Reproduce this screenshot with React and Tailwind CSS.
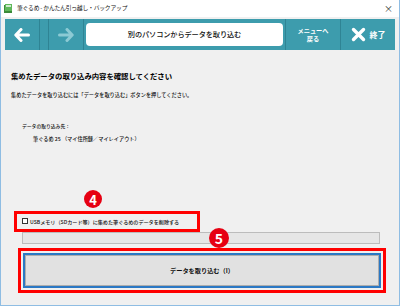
import React from 'react';

const font = { fontFamily: '"Noto Sans CJK JP", "Noto Sans", sans-serif' };

const Badge = ({ n, className }) => (
    <div className={`absolute rounded-full bg-[#e60012] text-white font-bold flex items-center justify-center ${className}`}>
        <span className="leading-none">{n}</span>
    </div>
);

const App = () => {
    return (
        <div className="w-[400px] h-[306px] bg-[#f0f0f0] border-x border-b border-[#8fbde3] flex flex-col overflow-hidden text-[#1a1a1a]" style={font}>
            {/* title bar */}
            <div className="h-[17px] bg-white flex items-center pl-[3px] pr-[6px] shrink-0">
                <svg width="9" height="10" viewBox="0 0 9 10" className="mr-[4px]">
                    <rect x="0" y="1" width="8" height="8" fill="#3b8a3a" />
                    <rect x="1" y="0" width="7" height="7" fill="#5fb85a" />
                    <rect x="2" y="1" width="5" height="2" fill="#ffffff" opacity="0.7" />
                </svg>
                <span className="text-[5.8px] tracking-[-0.2px] text-[#111]">筆ぐるめ - かんたん引っ越し・バックアップ</span>
                <span className="ml-auto text-[9px] text-[#333] leading-none">×</span>
            </div>

            {/* toolbar */}
            <div className="mt-[2px] mx-[4px] h-[31px] bg-[#3d9cad] flex shrink-0">
                <div className="w-[35px] flex items-center justify-center border-r border-[#2f8494]">
                    <svg width="16" height="14" viewBox="0 0 16 14">
                        <path d="M7 1.5 L1.8 7 L7 12.5 M2.5 7 H14.5" stroke="#ffffff" strokeWidth="3" fill="none" strokeLinecap="round" strokeLinejoin="round" />
                    </svg>
                </div>
                <div className="w-[9px] border-r border-[#2f8494]" />
                <div className="w-[35px] flex items-center justify-center border-r border-[#2f8494]">
                    <svg width="16" height="14" viewBox="0 0 16 14">
                        <path d="M9 1.5 L14.2 7 L9 12.5 M13.5 7 H1.5" stroke="#8ccad4" strokeWidth="3" fill="none" strokeLinecap="round" strokeLinejoin="round" />
                    </svg>
                </div>
                <div className="flex-1 flex items-center px-[2px] border-r border-[#2f8494]">
                    <div className="w-full h-[23px] bg-white rounded-[4px] flex items-center justify-center">
                        <span className="text-[7.2px] font-medium tracking-[-0.1px] text-[#111]">別のパソコンからデータを取り込む</span>
                    </div>
                </div>
                <div className="w-[55px] flex flex-col items-center justify-center border-r border-[#2f8494] text-white font-bold text-[6.2px]">
                    <span className="block leading-[7.5px]">メニューへ</span>
                    <span className="block leading-[7.5px]">戻る</span>
                </div>
                <div className="w-[54px] flex items-center justify-center gap-[4px] text-white">
                    <svg width="15" height="15" viewBox="0 0 15 15">
                        <path d="M2.5 2.5 L12.5 12.5 M12.5 2.5 L2.5 12.5" stroke="#ffffff" strokeWidth="3.4" strokeLinecap="round" />
                    </svg>
                    <span className="text-[8px] font-bold">終了</span>
                </div>
            </div>

            {/* content */}
            <div className="relative flex-1 flex flex-col">
                <div className="pl-[10px] pt-[20px] text-[7.4px] font-bold tracking-[-0.05px] text-[#000]">集めたデータの取り込み内容を確認してください</div>
                <div className="pl-[10px] pt-[10px] text-[5.2px] font-medium text-[#111]">集めたデータを取り込むには「データを取り込む」ボタンを押してください。</div>
                <div className="pl-[21px] pt-[23px] text-[4.8px] font-medium text-[#111]">データの取り込み先：</div>
                <div className="pl-[32px] pt-[6px] text-[5.2px] font-medium text-[#111]">筆ぐるめ 25 （マイ住所録／マイレイアウト）</div>

                <div className="ml-[13px] mt-[68px] w-[186px] h-[21px] border-[3px] border-[#ff0000] flex items-center pl-[5px] gap-[2px]">
                    <div className="w-[6px] h-[6px] border border-[#333] bg-white" />
                    <span className="text-[5.1px] font-medium text-[#111]">USBメモリ（SDカード等）に集めた筆ぐるめのデータを削除する</span>
                </div>

                <div className="ml-[21px] w-[358px] h-[12px] bg-[#e6e6e6] border border-[#bcbcbc]" />

                <div className="ml-[17px] mt-[4px] w-[368px] h-[45px] border-[3px] border-[#ff0000] p-[2px]">
                    <div className="w-full h-full border-[2px] border-[#2b78c4] bg-[#e1e1e1] flex items-center justify-center">
                        <div className="w-full h-full border border-[#adadad] flex items-center justify-center">
                            <span className="text-[6.2px] font-bold text-[#111]">データを取り込む（I）</span>
                        </div>
                    </div>
                </div>

                <Badge n="4" className="left-[83px] top-[140px] w-[18px] h-[18px] text-[13px]" />
                <Badge n="5" className="left-[208px] top-[178px] w-[20px] h-[20px] text-[14px]" />
            </div>
        </div>
    );
};

export default App;
